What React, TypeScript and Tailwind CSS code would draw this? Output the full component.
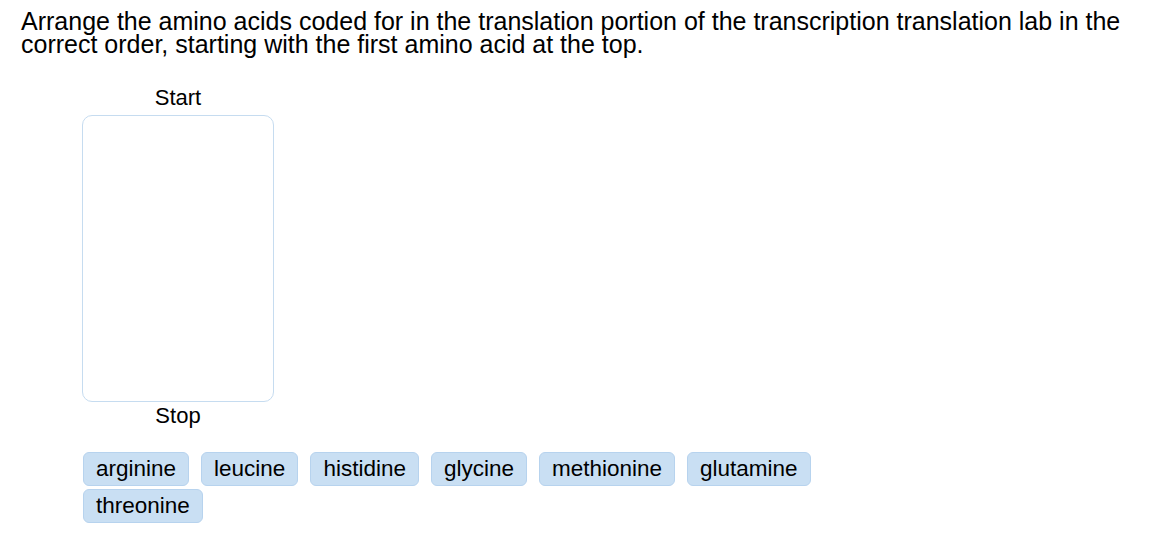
export default function App() {
  const row1 = ["arginine", "leucine", "histidine", "glycine", "methionine", "glutamine"];
  const row2 = ["threonine"];
  const chip =
    "h-[34px] px-3 flex items-center rounded-[6px] border border-[#b7d3ee] bg-[#c9dff3] text-[22.5px] leading-[24px] text-black";
  return (
    <div
      className="w-[1150px] h-[540px] bg-white text-black pl-[21px] pt-[10px]"
      style={{ fontFamily: '"Liberation Sans", Arial, sans-serif' }}
    >
      <p className="text-[25px] leading-[23px] whitespace-nowrap">
        Arrange the amino acids coded for in the translation portion of the transcription translation lab in the
        <br />
        correct order, starting with the first amino acid at the top.
      </p>
      <div className="ml-[61px] mt-[30px] w-[192px] flex flex-col items-center">
        <div className="text-[22px] leading-[24px]">Start</div>
        <div className="mt-[5px] w-[192px] h-[287px] rounded-[10px] border border-[#c6dcf0]" />
        <div className="mt-[2px] text-[22px] leading-[24px]">Stop</div>
      </div>
      <div className="ml-[62px] mt-[24px] flex flex-col gap-[3px]">
        <div className="flex gap-[12px]">
          {row1.map((w) => (
            <div key={w} className={chip}>
              {w}
            </div>
          ))}
        </div>
        <div className="flex gap-[12px]">
          {row2.map((w) => (
            <div key={w} className={chip}>
              {w}
            </div>
          ))}
        </div>
      </div>
    </div>
  );
}
